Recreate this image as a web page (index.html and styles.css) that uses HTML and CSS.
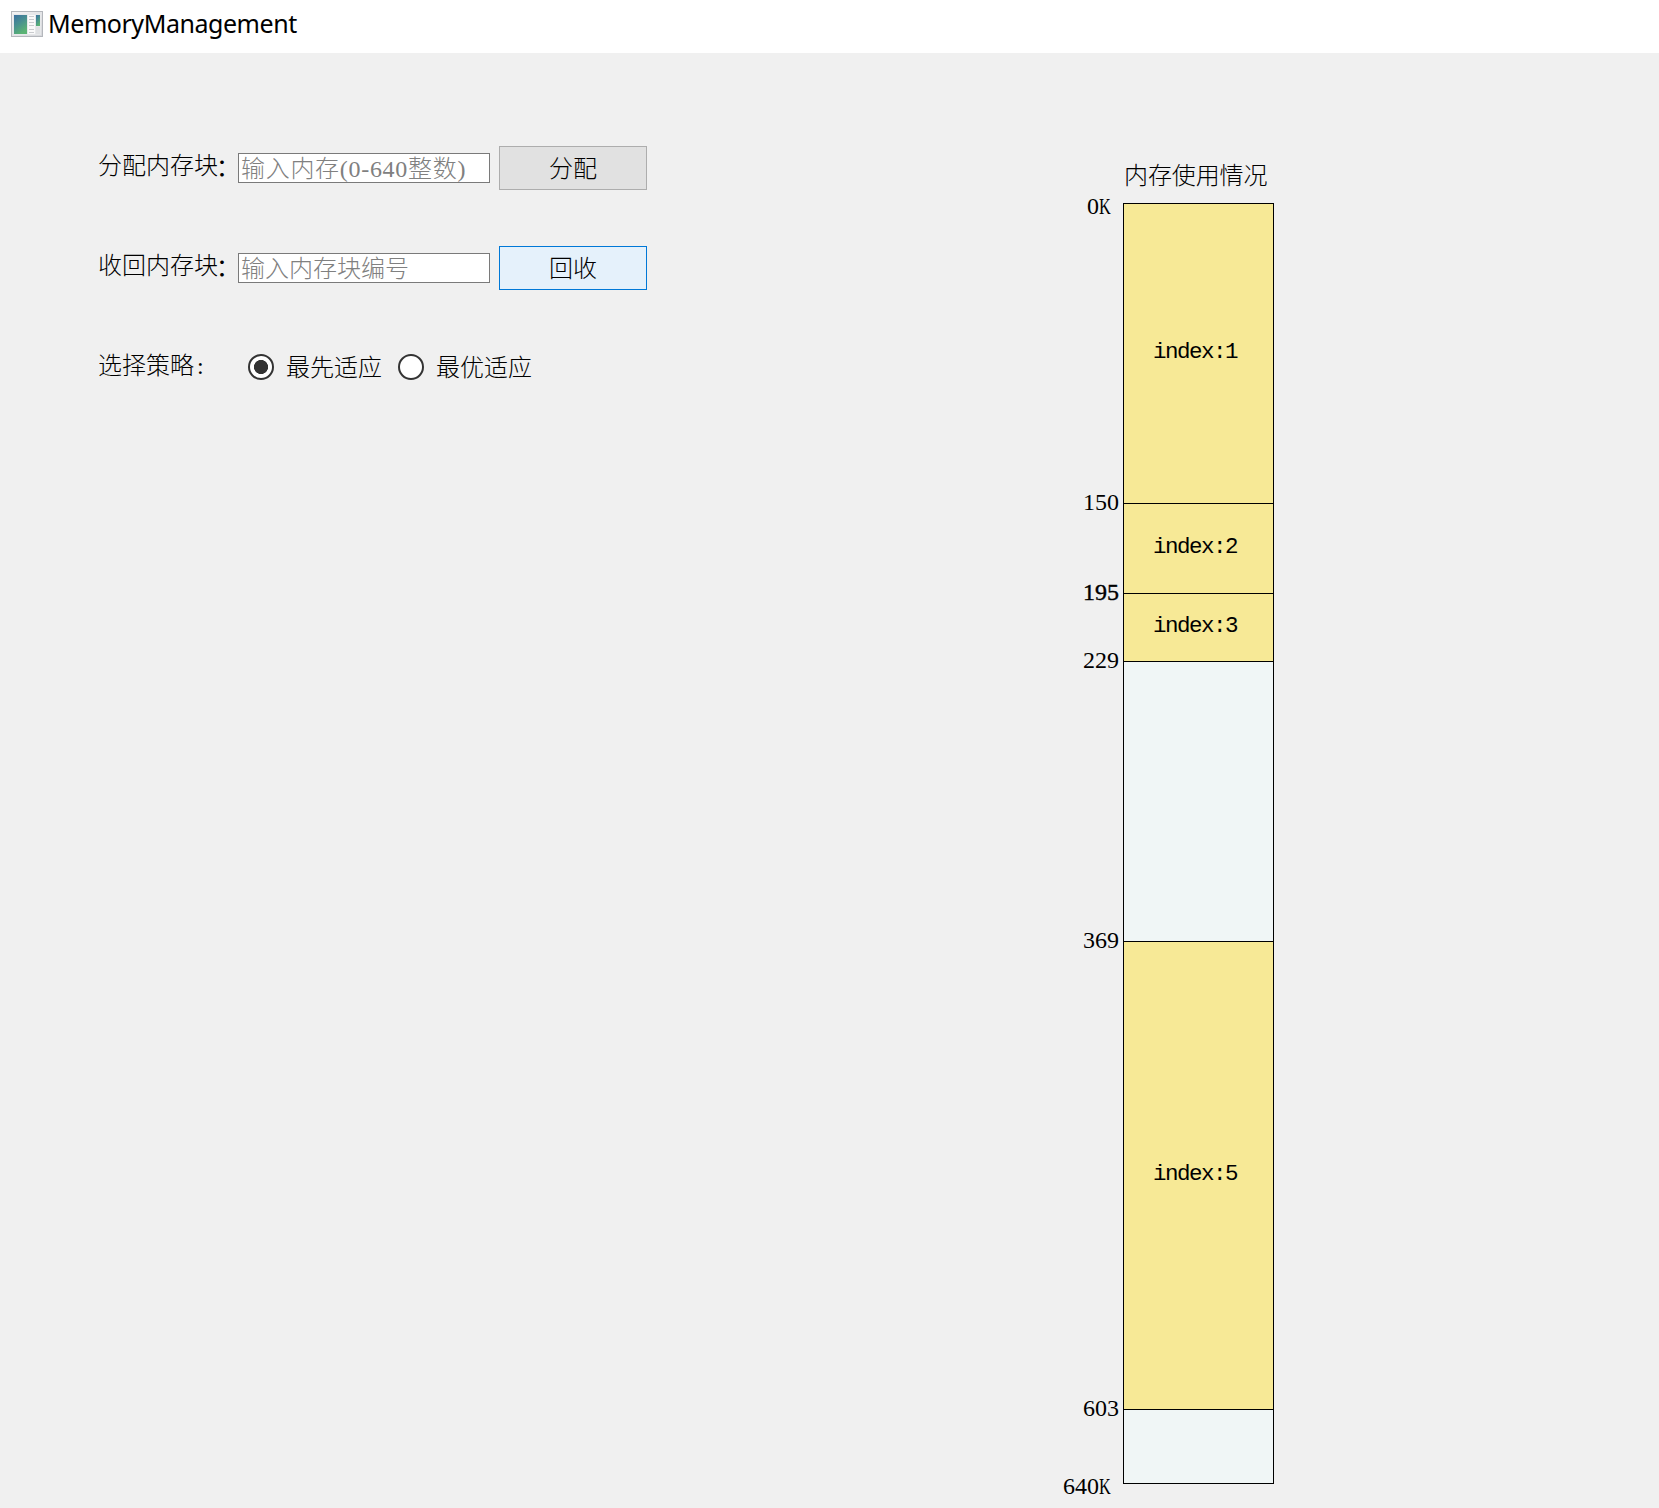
FILE: index.html
```html
<!DOCTYPE html>
<html lang="zh-CN">
<head>
<meta charset="utf-8">
<title>MemoryManagement</title>
<link rel="stylesheet" href="styles.css">
</head>
<body>
<header class="titlebar">
  <svg class="app-icon" width="32" height="26" viewBox="0 0 32 26">
    <defs>
      <linearGradient id="pane" x1="0" y1="0" x2="0.5" y2="1"><stop offset="0" stop-color="#3c70a0"/><stop offset="0.5" stop-color="#489090"/><stop offset="1" stop-color="#5bb374"/></linearGradient>
      <linearGradient id="frame" x1="0" y1="0" x2="1" y2="1"><stop offset="0" stop-color="#f4f4f5"/><stop offset="1" stop-color="#d5d6da"/></linearGradient>
    </defs>
    <rect x="0.5" y="0.5" width="31" height="25" fill="url(#frame)" stroke="#b4b7bc"/>
    <rect x="2" y="3" width="28" height="21" fill="#e6e8ea"/>
    <rect x="3" y="4" width="13" height="19" fill="url(#pane)"/>
    <rect x="17" y="4" width="7" height="19" fill="#fafafa"/>
    <path d="M18 5.500h5M18 8.500h5M18 11.500h5M18 14.500h5M18 18.500h5M18 21.500h5" stroke="#c9cbce"/>
    <rect x="25" y="4" width="4" height="11" fill="url(#pane)"/>
    <rect x="25" y="16" width="4" height="7" fill="#dfe1e3"/>
  </svg>
  <span class="title">MemoryManagement</span>
</header>
<main class="content">
  <form class="controls">
    <div class="row">
      <label class="caption" for="size">分配内存块<span class="wide-colon">：</span></label>
      <input class="field field-size" id="size" type="text" placeholder="输入内存(0-640整数)">
      <button class="button" type="button">分配</button>
    </div>
    <div class="row">
      <label class="caption" for="block">收回内存块<span class="wide-colon">：</span></label>
      <input class="field" id="block" type="text" placeholder="输入内存块编号">
      <button class="button button-active" type="button">回收</button>
    </div>
    <div class="row">
      <span class="caption caption-strategy">选择策略<span class="colon">:</span></span>
      <label class="option"><input class="radio" type="radio" name="fit" checked><span class="option-text">最先适应</span></label>
      <label class="option"><input class="radio" type="radio" name="fit"><span class="option-text">最优适应</span></label>
    </div>
  </form>
  <section class="memory">
    <h1 class="heading">内存使用情况</h1>
    <div class="segment" style="height:300px"><span class="tick tick-limit">0<span class="unit">K</span></span><div class="block used">index:1</div></div>
    <div class="segment" style="height:90px"><span class="tick">150</span><div class="block used">index:2</div></div>
    <div class="segment" style="height:68px"><span class="tick tick-strong">195</span><div class="block used">index:3</div></div>
    <div class="segment" style="height:280px"><span class="tick">229</span><div class="block"></div></div>
    <div class="segment" style="height:468px"><span class="tick">369</span><div class="block used">index:5</div></div>
    <div class="segment" style="height:74px"><span class="tick">603</span><div class="block"></div></div>
    <div class="segment segment-end"><span class="tick tick-limit">640<span class="unit">K</span></span><div class="block"></div></div>
  </section>
</main>
</body>
</html>
```
FILE: styles.css
```css
* { box-sizing: border-box; }
body {
  margin: 0;
  height: 1508px;
  overflow: hidden;
  background: #f0f0f0;
  color: #000;
  font: 300 24px/28px "Liberation Serif", "Noto Sans CJK SC", serif;
}
.titlebar {
  display: flex;
  align-items: center;
  height: 53px;
  padding: 0 11px 5px;
  gap: 5px;
  background: #fff;
}
.title {
  padding-bottom: 2px;
  font: 400 25px/32px "Noto Sans", sans-serif;
  letter-spacing: -0.450px;
  white-space: nowrap;
}
.content {
  display: grid;
  grid-template-columns: 1050px 224px;
}
.controls {
  display: flex;
  flex-direction: column;
  gap: 56px;
  padding: 93px 0 0 98px;
}
.row {
  display: flex;
  align-items: center;
  height: 44px;
}
.caption {
  width: 140px;
  flex: none;
  padding-bottom: 4px;
  white-space: nowrap;
}
.caption-strategy { width: 150px; }
.colon { margin-left: 3px; }
.wide-colon {
  display: inline-block;
  font-weight: 400;
  transform: translate(-2px, 2px);
}
.field {
  width: 252px;
  height: 30px;
  margin: 0 9px 0 0;
  padding: 2px 2px 0;
  border: 1px solid #7a7a7a;
  background: #fff;
  font: inherit;
}
.field-size { letter-spacing: 0.700px; }
.field::placeholder { color: #808080; opacity: 1; }
.button {
  width: 148px;
  height: 44px;
  padding: 2px 0 0;
  border: 1px solid #adadad;
  background: #e1e1e1;
  color: #000;
  font: inherit;
}
.button-active { border-color: #0078d7; background: #e5f1fb; }
.option {
  display: flex;
  align-items: center;
  width: 150px;
  padding-bottom: 2px;
  white-space: nowrap;
}
.option-text { padding-top: 2px; }
.radio {
  appearance: none;
  flex: none;
  width: 26px;
  height: 26px;
  margin: 0 12px 0 0;
  border: 2px solid #333;
  border-radius: 50%;
  background: #fff;
}
.radio:checked { background: radial-gradient(circle, #333 6.700px, #fff 7.400px); }
.memory { padding-top: 109px; }
.heading {
  margin: 0 0 13px 74px;
  font: inherit;
  letter-spacing: -0.1px;
  white-space: nowrap;
}
.segment { display: flex; }
.tick {
  width: 73px;
  margin-top: -15px;
  padding-right: 4px;
  text-align: right;
}
.tick-limit { margin-top: -11px; padding-right: 12px; }
/* capital K fitted to the half-width digit cell */
.unit {
  display: inline-block;
  width: 12px;
  transform: scaleX(0.68);
  transform-origin: 0 50%;
  text-align: left;
}
.tick-strong { -webkit-text-stroke: 0.4px #000; }
.block {
  display: flex;
  align-items: center;
  justify-content: center;
  width: 151px;
  padding: 0 7px 4px 0;
  border: solid #000;
  border-width: 1px 1px 0;
  background: #f0f6f6;
  font: 22.500px/28px "Liberation Mono", monospace;
  letter-spacing: -1.500px;
}
.used { background: #f7e996; }
.segment-end { height: 1px; }
.segment-end .block { padding: 0; height: 1px; }
```
